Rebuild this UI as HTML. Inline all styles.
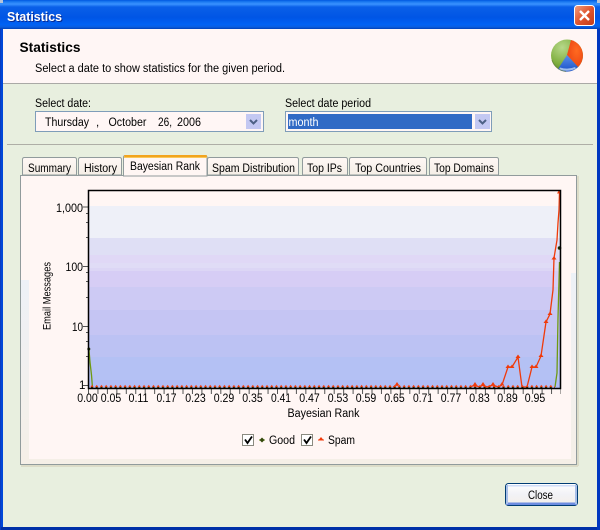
<!DOCTYPE html>
<html><head><meta charset="utf-8"><title>Statistics</title>
<style>html,body{margin:0;padding:0;background:#e8efdf}svg{display:block}text{font-family:"Liberation Sans",Arial,sans-serif;font-size:11.5px;fill:#000}</style></head>
<body>
<svg width="600" height="530" viewBox="0 0 600 530" xmlns="http://www.w3.org/2000/svg">
<defs>
<linearGradient id="tb" x1="0" y1="0" x2="0" y2="1">
<stop offset="0" stop-color="#0058e0"/><stop offset=".06" stop-color="#1a78f0"/><stop offset=".14" stop-color="#3a93ff"/><stop offset=".24" stop-color="#0a60e8"/><stop offset=".6" stop-color="#0055e5"/><stop offset=".85" stop-color="#0062f5"/><stop offset=".93" stop-color="#0a5ee0"/><stop offset="1" stop-color="#0040b8"/>
</linearGradient>
<linearGradient id="cl" x1="0" y1="0" x2="1" y2="1"><stop offset="0" stop-color="#f0a080"/><stop offset=".5" stop-color="#e0552f"/><stop offset="1" stop-color="#c03a18"/></linearGradient>
<linearGradient id="strip" x1="0" y1="0" x2="0" y2="1"><stop offset="0" stop-color="#eef1f7"/><stop offset="1" stop-color="#f5efe7"/></linearGradient>
<linearGradient id="cb" x1="0" y1="0" x2="0" y2="1"><stop offset="0" stop-color="#fff"/><stop offset=".5" stop-color="#f2f2f6"/><stop offset="1" stop-color="#f4efe8"/></linearGradient>
<linearGradient id="tabg" x1="0" y1="0" x2="0" y2="1"><stop offset="0" stop-color="#fff8f5"/><stop offset="1" stop-color="#f4eee6"/></linearGradient>
<radialGradient id="pg" cx=".35" cy=".25" r=".85"><stop offset="0" stop-color="#b7d88a"/><stop offset=".6" stop-color="#7fae3e"/><stop offset="1" stop-color="#4f7c28"/></radialGradient>
<radialGradient id="pr" cx=".6" cy=".4" r=".8"><stop offset="0" stop-color="#ff6a20"/><stop offset="1" stop-color="#e83c10"/></radialGradient>
<linearGradient id="pb" x1="0" y1="0" x2="0" y2="1"><stop offset="0" stop-color="#5a90e8"/><stop offset="1" stop-color="#1a50c8"/></linearGradient>
<pattern id="mk" patternUnits="userSpaceOnUse" x="90" y="384" width="4.73" height="5">
<path d="M2 0.800L3.700 3.200H0.300Z" fill="#f03a0a"/><rect x="1" y="3" width="2" height="1.600" fill="#1e2e00"/>
</pattern>
</defs>

<!-- window frame -->
<rect width="600" height="530" fill="#0047d8"/>
<rect x="0" y="0" width="600" height="29" fill="url(#tb)"/>
<rect x="0" y="527" width="600" height="3" fill="#0030a8"/>
<rect x="0" y="29" width="1" height="501" fill="#0a3cc0"/>
<rect x="597" y="29" width="3" height="501" fill="#0037c0"/>
<rect x="3" y="29" width="594" height="498" fill="#e8efdf"/>
<rect x="0" y="0" width="3" height="3" fill="#b8c4d8"/><rect x="597" y="0" width="3" height="3" fill="#b8c4d8"/>

<text x="7" y="21" textLength="55" lengthAdjust="spacingAndGlyphs" style="font-weight:bold;font-size:13px;fill:#0a2a90" transform="translate(1 1)">Statistics</text>
<text x="7" y="21" textLength="55" lengthAdjust="spacingAndGlyphs" style="font-weight:bold;font-size:13px;fill:#fff">Statistics</text>

<!-- close button -->
<rect x="574.500" y="5.500" width="20" height="20" rx="3" fill="url(#cl)" stroke="#fff"/>
<path d="M580 11L589 20M589 11L580 20" stroke="#fff" stroke-width="2.400"/>

<!-- header -->
<rect x="3" y="29" width="594" height="54" fill="#fff6f5"/>
<rect x="3" y="83" width="594" height="1" fill="#aaa9a6"/>
<text x="19.500" y="52" textLength="61" lengthAdjust="spacingAndGlyphs" style="font-weight:bold;font-size:13.500px">Statistics</text>
<text x="35" y="72" textLength="250" lengthAdjust="spacingAndGlyphs">Select a date to show statistics for the given period.</text>

<!-- pie icon -->
<circle cx="567" cy="55.500" r="16" fill="url(#pg)"/>
<path d="M571 40A16 16 0 0 1 578 67L567 55Z" fill="url(#pr)"/>
<path d="M567 55L578 67A16 16 0 0 1 558 69Z" fill="url(#pb)"/>
<path d="M560 67.500Q568 70 575 67L576 68.500Q568 72.500 559 69.500Z" fill="#9fbcec"/>
<path d="M552 60A16 16 0 0 0 566 71.500" stroke="#5b7a38" stroke-width="1" fill="none" opacity=".6"/>

<!-- form -->
<text x="35" y="107" textLength="56" lengthAdjust="spacingAndGlyphs">Select date:</text>
<rect x="35.500" y="111.500" width="228" height="20" fill="#fff6f5" stroke="#7f9db9"/>
<text x="45" y="126" textLength="44" lengthAdjust="spacingAndGlyphs">Thursday</text>
<text x="96" y="126">,</text>
<text x="108.500" y="126" textLength="38" lengthAdjust="spacingAndGlyphs">October</text>
<text x="158" y="126" textLength="14" lengthAdjust="spacingAndGlyphs">26,</text>
<text x="177" y="126" textLength="24" lengthAdjust="spacingAndGlyphs">2006</text>
<rect x="246" y="114" width="15" height="15" fill="#c3c8f2"/>
<path d="M250 120l3.500 3.500l3.500-3.500" stroke="#4d6185" stroke-width="2" fill="none"/>

<text x="285" y="107" textLength="86" lengthAdjust="spacingAndGlyphs">Select date period</text>
<rect x="285.500" y="111.500" width="206" height="20" fill="#fff6f5" stroke="#7f9db9"/>
<rect x="288" y="114" width="184" height="15" fill="#316ac5"/>
<text x="288.500" y="126" textLength="30" lengthAdjust="spacingAndGlyphs" style="fill:#fff">month</text>
<rect x="475" y="114" width="15" height="15" fill="#c3c8f2"/>
<path d="M479 120l3.500 3.500l3.500-3.500" stroke="#4d6185" stroke-width="2" fill="none"/>

<rect x="7" y="144" width="586" height="1" fill="#aeaea6"/>

<!-- tab panel -->
<rect x="20.500" y="175.500" width="556" height="289" fill="#f5efe7" stroke="#919b9c"/>
<rect x="21" y="465" width="557" height="2" fill="#dcdcc8"/>
<rect x="577" y="176" width="2" height="290" fill="#dcdcc8"/>
<rect x="21" y="176" width="555" height="104" fill="#fff6f4"/>
<rect x="21" y="280" width="8" height="180" fill="url(#strip)"/>
<rect x="571" y="273" width="5" height="187" fill="url(#strip)"/>
<rect x="29" y="176" width="542" height="283" fill="#fff6f4"/>

<!-- inactive tabs -->
<g fill="url(#tabg)" stroke="#919b9c">
<path d="M22.500 175V159.500q0-2 2-2H74.500q2 0 2 2V175Z"/>
<path d="M78.500 175V159.500q0-2 2-2H119.500q2 0 2 2V175Z"/>
<path d="M207.500 175V159.500q0-2 2-2H296.500q2 0 2 2V175Z"/>
<path d="M302.500 175V159.500q0-2 2-2H345.500q2 0 2 2V175Z"/>
<path d="M349.500 175V159.500q0-2 2-2H424.500q2 0 2 2V175Z"/>
<path d="M429.500 175V159.500q0-2 2-2H496.500q2 0 2 2V175Z"/>
</g>
<!-- active tab -->
<path d="M123.500 176V157.500q0-2 2-2H205q2 0 2 2V176Z" fill="#fff6f4" stroke="#919b9c"/>
<rect x="124" y="155" width="83" height="2" fill="#f2a41e" rx="1"/>
<rect x="124" y="157" width="83" height="1" fill="#f8c85c"/>

<text x="28" y="172" textLength="43" lengthAdjust="spacingAndGlyphs">Summary</text>
<text x="84" y="172" textLength="33" lengthAdjust="spacingAndGlyphs">History</text>
<text x="130" y="170" textLength="70" lengthAdjust="spacingAndGlyphs">Bayesian Rank</text>
<text x="212" y="172" textLength="83" lengthAdjust="spacingAndGlyphs">Spam Distribution</text>
<text x="307" y="172" textLength="35" lengthAdjust="spacingAndGlyphs">Top IPs</text>
<text x="355" y="172" textLength="66" lengthAdjust="spacingAndGlyphs">Top Countries</text>
<text x="434" y="172" textLength="60" lengthAdjust="spacingAndGlyphs">Top Domains</text>

<!-- plot background -->
<rect x="88" y="190" width="473" height="16" fill="#fff6f4"/>
<rect x="88" y="206" width="473" height="32" fill="#eef0f8"/>
<rect x="88" y="238" width="473" height="17" fill="#dfdff5"/>
<rect x="88" y="255" width="473" height="8" fill="#e0d8f6"/>
<rect x="88" y="263" width="473" height="5" fill="#e0dcf6"/>
<rect x="88" y="268" width="473" height="3" fill="#dcd6f5"/>
<rect x="88" y="271" width="473" height="16" fill="#d6cdf5"/>
<rect x="88" y="287" width="473" height="23" fill="#cdcaf4"/>
<rect x="88" y="310" width="473" height="25" fill="#c5c5f3"/>
<rect x="88" y="335" width="473" height="22" fill="#bcc2f3"/>
<rect x="88" y="357" width="473" height="23" fill="#b4c1f4"/>
<rect x="88" y="380" width="473" height="9" fill="#b0bcf5"/>

<!-- y ticks -->
<g stroke="#555" stroke-width="1">
<path d="M83 207H88M83 266.500H88M83 326.500H88M83 385.500H88"/>
<path d="M86 213.500H88M86 222.500H88M86 237.500H88M86 272.500H88M86 281.500H88M86 297.500H88M86 332.500H88M86 341.500H88M86 356.500H88"/>
</g>
<!-- x ticks -->
<line x1="88" y1="391.500" x2="561" y2="391.500" stroke="#555" stroke-width="5" stroke-dasharray="1 8.450"/>

<!-- series -->
<polyline fill="none" stroke="#6f9a12" stroke-width="1.300" points="89,350 90,362 91.500,375 92.500,388"/>
<polyline fill="none" stroke="#6f9a12" stroke-width="1.300" points="555,387 557,373 558,318 559.500,262"/>
<polyline fill="none" stroke="#f03a0a" stroke-width="1" points="393,387 397,385 400,387"/>
<polyline fill="none" stroke="#f03a0a" stroke-width="1.300" points="470,387 475,385 479,387 483,385 487,387 493,385 498,387 502,385 508,367 512,367 518,357 522,387 527,387 532,367 536,367 541,356 546,322 550,314 553,290 554,258 557,240 558,223 559,210 559.500,192"/>

<!-- bottom markers -->
<rect x="90" y="384" width="465" height="5" fill="url(#mk)"/>
<g fill="#f03a0a">
<path d="M475 382l2 3h-4zM483 382l2 3h-4zM493 382l2 3h-4zM502 382l2 3h-4zM397 382l2 3h-4z"/>
<path d="M508 364.500l2.500 3.500h-5zM512 364.500l2.500 3.500h-5zM518 354.500l2.500 3.500h-5zM532 364.500l2.500 3.500h-5zM536 364.500l2.500 3.500h-5zM541 353.500l2.500 3.500h-5zM546 319.500l2.500 3.500h-5zM550 311.500l2.500 3.500h-5zM554 256l2.500 3.500h-5zM559 190l2 3.500h-4z"/>
</g>
<circle cx="88.800" cy="349" r="1.500" fill="#1e2e00"/>
<circle cx="559.500" cy="248" r="1.800" fill="#1e2e00"/>

<!-- plot border -->
<path d="M88.500 190.500H560.500V388.500H88.500Z" fill="none" stroke="#000" stroke-width="1.500"/>

<!-- axis labels -->
<text x="56" y="212" textLength="27" lengthAdjust="spacingAndGlyphs">1,000</text>
<text x="65.500" y="271" textLength="17.500" lengthAdjust="spacingAndGlyphs">100</text>
<text x="72" y="331" textLength="11" lengthAdjust="spacingAndGlyphs">10</text>
<text x="79" y="389">1</text>
<text transform="translate(50.500 330) rotate(-90)" x="0" y="0" textLength="68" lengthAdjust="spacingAndGlyphs" style="font-size:11px">Email Messages</text>

<g text-anchor="middle">
<text x="87.500" y="402" textLength="20.500" lengthAdjust="spacingAndGlyphs">0.00</text>
<text x="111" y="402" textLength="20.500" lengthAdjust="spacingAndGlyphs">0.05</text>
<text x="138.500" y="402" textLength="20" lengthAdjust="spacingAndGlyphs">0.11</text>
<text x="166.500" y="402" textLength="20" lengthAdjust="spacingAndGlyphs">0.17</text>
<text x="195.500" y="402" textLength="20.500" lengthAdjust="spacingAndGlyphs">0.23</text>
<text x="224" y="402" textLength="20.500" lengthAdjust="spacingAndGlyphs">0.29</text>
<text x="252.500" y="402" textLength="20.500" lengthAdjust="spacingAndGlyphs">0.35</text>
<text x="281" y="402" textLength="20" lengthAdjust="spacingAndGlyphs">0.41</text>
<text x="309.500" y="402" textLength="20.500" lengthAdjust="spacingAndGlyphs">0.47</text>
<text x="338" y="402" textLength="20.500" lengthAdjust="spacingAndGlyphs">0.53</text>
<text x="366" y="402" textLength="20.500" lengthAdjust="spacingAndGlyphs">0.59</text>
<text x="394.500" y="402" textLength="20.500" lengthAdjust="spacingAndGlyphs">0.65</text>
<text x="423" y="402" textLength="20" lengthAdjust="spacingAndGlyphs">0.71</text>
<text x="451" y="402" textLength="20.500" lengthAdjust="spacingAndGlyphs">0.77</text>
<text x="479.500" y="402" textLength="20.500" lengthAdjust="spacingAndGlyphs">0.83</text>
<text x="507.500" y="402" textLength="20.500" lengthAdjust="spacingAndGlyphs">0.89</text>
<text x="535" y="402" textLength="20.500" lengthAdjust="spacingAndGlyphs">0.95</text>
</g>
<text x="287.500" y="417" textLength="72" lengthAdjust="spacingAndGlyphs">Bayesian Rank</text>

<!-- legend -->
<rect x="242.500" y="434.500" width="11" height="11" fill="#fff" stroke="#8a8a80" stroke-width="1"/>
<path d="M245 439.500l2.500 3.500l4.500-6.500" stroke="#000" stroke-width="1.800" fill="none"/>
<path d="M259 440h6" stroke="#6f9a12"/><path d="M262 437.500l2.500 2.500l-2.500 2.500l-2.500-2.500Z" fill="#33490a"/>
<text x="269" y="444" textLength="26" lengthAdjust="spacingAndGlyphs">Good</text>
<rect x="301.500" y="434.500" width="11" height="11" fill="#fff" stroke="#8a8a80" stroke-width="1"/>
<path d="M304 439.500l2.500 3.500l4.500-6.500" stroke="#000" stroke-width="1.800" fill="none"/>
<path d="M318 440h6" stroke="#f03a0a"/><path d="M321 437l2.500 3h-5z" fill="#f03a0a"/>
<text x="328" y="444" textLength="27" lengthAdjust="spacingAndGlyphs">Spam</text>

<!-- close -->
<rect x="505.500" y="483.500" width="72" height="22" rx="3" fill="url(#cb)" stroke="#003c74"/>
<rect x="506" y="485" width="71" height="1.500" fill="#cfdcf8"/>
<rect x="506" y="502.500" width="71" height="2.500" fill="#6d8ce0"/>
<rect x="506" y="485" width="2" height="19" fill="#a8bfe8"/>
<rect x="575" y="485" width="2" height="19" fill="#a8bfe8"/>
<text x="528" y="499" textLength="25" lengthAdjust="spacingAndGlyphs">Close</text>
</svg>
</body></html>
